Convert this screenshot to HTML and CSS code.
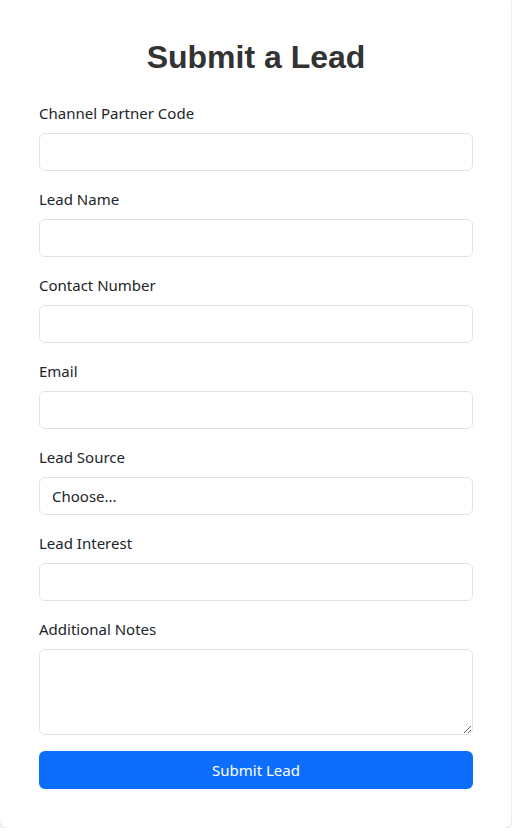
FILE: index.html
```html
<!DOCTYPE html>
<html lang="en">
<head>
<meta charset="utf-8">
<title>Submit a Lead</title>
<link rel="stylesheet" href="styles.css">
</head>
<body>
<div class="card">
  <h1 class="title">Submit a Lead</h1>
  <form class="form">
    <div class="field">
      <label class="label" for="cp">Channel Partner Code</label>
      <input class="control" id="cp" type="text">
    </div>
    <div class="field">
      <label class="label" for="ln">Lead Name</label>
      <input class="control" id="ln" type="text">
    </div>
    <div class="field">
      <label class="label" for="cn">Contact Number</label>
      <input class="control" id="cn" type="text">
    </div>
    <div class="field">
      <label class="label" for="em">Email</label>
      <input class="control" id="em" type="email">
    </div>
    <div class="field">
      <label class="label" for="ls">Lead Source</label>
      <select class="control select" id="ls">
        <option>Choose...</option>
      </select>
    </div>
    <div class="field">
      <label class="label" for="li">Lead Interest</label>
      <input class="control" id="li" type="text">
    </div>
    <div class="field">
      <label class="label" for="an">Additional Notes</label>
      <textarea class="control textarea" id="an" rows="3"></textarea>
    </div>
    <button class="submit" type="button">Submit Lead</button>
  </form>
</div>
</body>
</html>
```
FILE: styles.css
```css
* { box-sizing: border-box; }
html, body { margin: 0; padding: 0; background: #ffffff; }
body {
  font-family: "Noto Sans", "Open Sans", sans-serif;
  font-size: 15px;
  color: #212529;
}
.card {
  width: 511px;
  background: #fff;
  border-radius: 0 0 8px 8px;
  box-shadow: 0 1px 4px rgba(0,0,0,0.18);
  padding: 39px 38px 39px 39px;
}
.title {
  margin: -1px 0 25px;
  text-align: center;
  font-family: "Liberation Sans", Arial, sans-serif;
  font-weight: bold;
  font-size: 32px;
  line-height: 38px;
  color: #333333;
}
.form { display: flex; flex-direction: column; }
.field { display: flex; flex-direction: column; margin-bottom: 16px; }
.label { line-height: 24px; margin-bottom: 8px; }
.control {
  display: block;
  width: 100%;
  height: 38px;
  padding: 6px 12px;
  border: 1px solid #dee2e6;
  border-radius: 6px;
  background: #fff;
  font: inherit;
  line-height: 24px;
  color: #212529;
}
.select { appearance: none; -webkit-appearance: none; }
.textarea { height: 86px; resize: vertical; }
.submit {
  height: 38px;
  width: 100%;
  border: 0;
  border-radius: 6px;
  background: #0d6efd;
  color: #fff;
  font: inherit;
  font-size: 15px;
}
```
